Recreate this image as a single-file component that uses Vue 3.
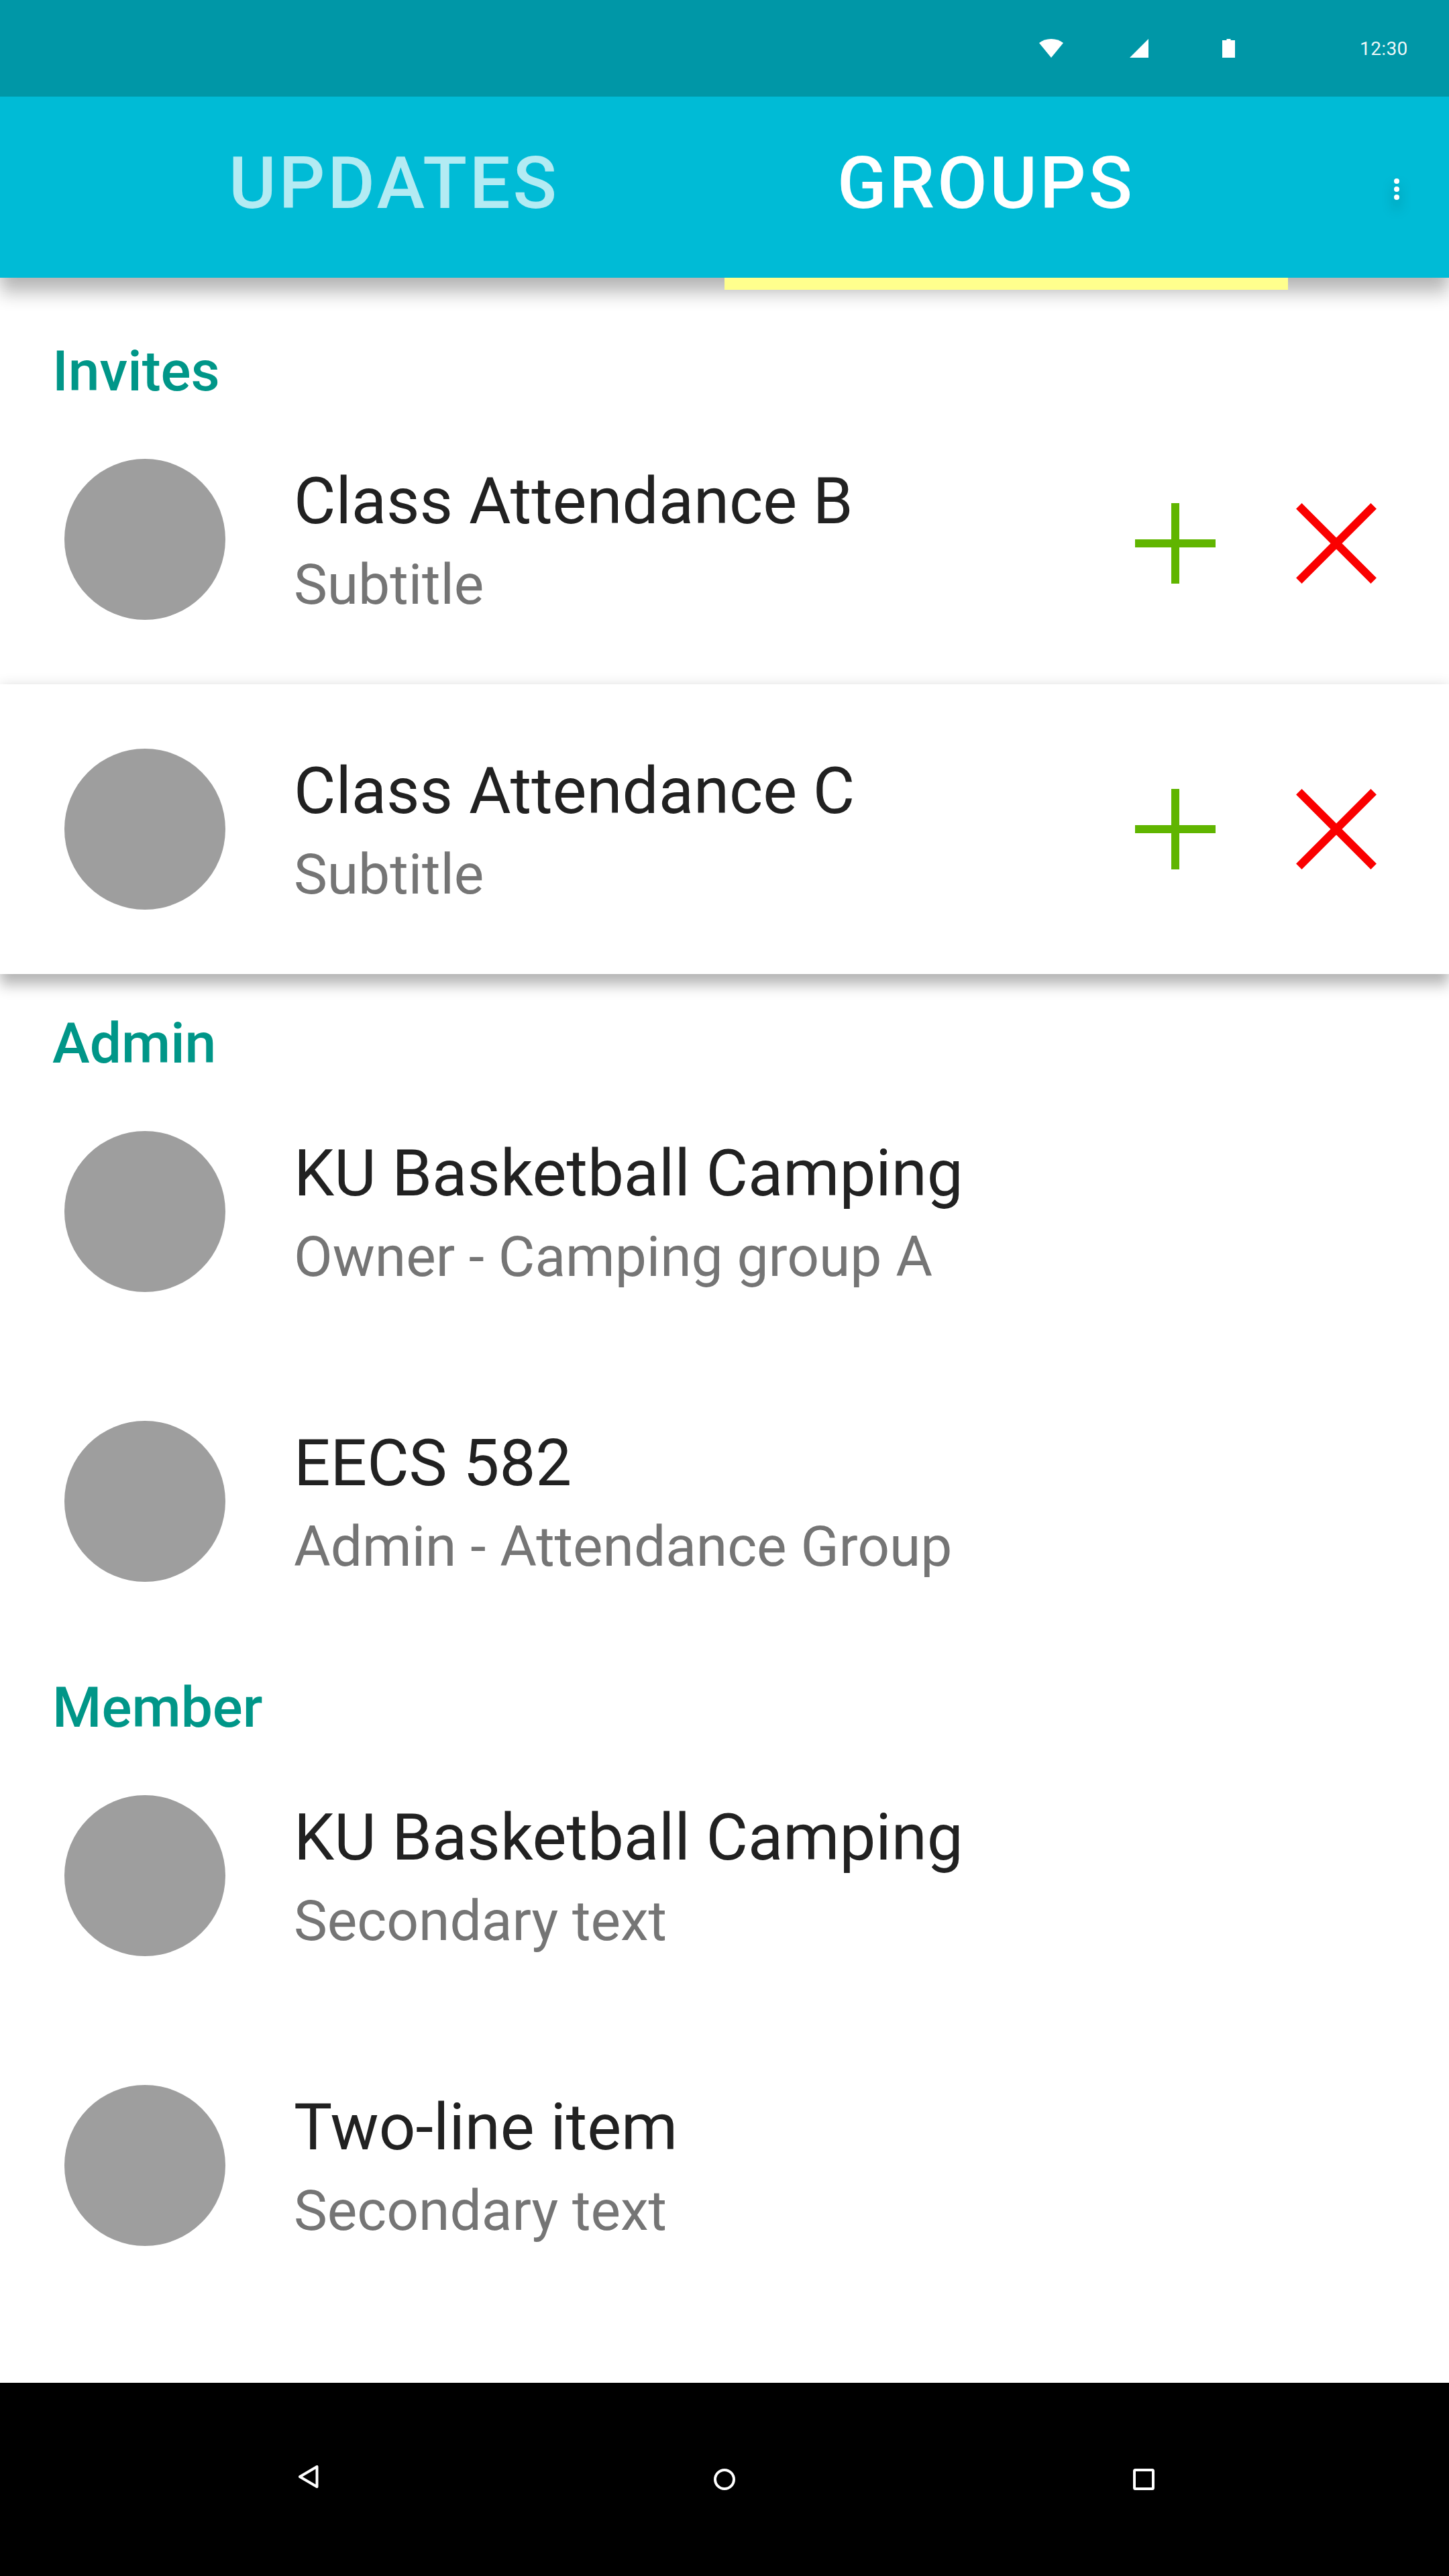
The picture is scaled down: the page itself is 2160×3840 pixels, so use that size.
<script setup>
const inviteRows = [
  { title: 'Class Attendance B', subtitle: 'Subtitle' },
  { title: 'Class Attendance C', subtitle: 'Subtitle' },
]
const sections = [
  {
    name: 'Admin',
    rows: [
      { title: 'KU Basketball Camping', subtitle: 'Owner - Camping group A' },
      { title: 'EECS 582', subtitle: 'Admin - Attendance Group' },
    ],
  },
  {
    name: 'Member',
    rows: [
      { title: 'KU Basketball Camping', subtitle: 'Secondary text' },
      { title: 'Two-line item', subtitle: 'Secondary text' },
    ],
  },
]
</script>

<template>
  <div class="screen">
    <header class="top">
      <div class="status">
        <svg class="wifi" width="38" height="28" viewBox="0 0 38 28"><path d="M19 28 1 6C6 2 12 0 19 0s13 2 18 6z" /></svg>
        <svg class="signal" width="28" height="28" viewBox="0 0 28 28"><path d="M0 28H28V0z" /></svg>
        <svg class="battery" width="19" height="28" viewBox="0 0 19 28"><path d="M0 2H6.500V0H12.500V2H19V28H0z" /></svg>
        <span class="clock">12:30</span>
      </div>
      <nav class="tabs">
        <div class="tab tab-updates"><span>UPDATES</span></div>
        <div class="tab tab-groups active"><span>GROUPS</span></div>
        <button class="more" aria-label="More options">
          <svg width="8" height="32" viewBox="0 0 8 32"><circle cx="4" cy="4" r="4" /><circle cx="4" cy="16" r="4" /><circle cx="4" cy="28" r="4" /></svg>
        </button>
      </nav>
    </header>

    <main class="content">
      <section class="invites">
        <h2>Invites</h2>
        <div v-for="row in inviteRows" :key="row.title" class="row">
          <div class="avatar"></div>
          <div class="text">
            <p class="title">{{ row.title }}</p>
            <p class="subtitle">{{ row.subtitle }}</p>
          </div>
          <div class="actions">
            <svg width="120" height="120" viewBox="0 0 120 120" stroke="#60b500" stroke-width="12"><path d="M0 60H120M60 0V120" /></svg>
            <svg width="120" height="120" viewBox="0 0 120 120" stroke="#fa0000" stroke-width="12"><path d="M4.300 4.300 115.700 115.700M115.700 4.300 4.300 115.700" /></svg>
          </div>
        </div>
      </section>

      <section v-for="section in sections" :key="section.name" class="group">
        <h2>{{ section.name }}</h2>
        <div v-for="row in section.rows" :key="row.title" class="row">
          <div class="avatar"></div>
          <div class="text">
            <p class="title">{{ row.title }}</p>
            <p class="subtitle">{{ row.subtitle }}</p>
          </div>
        </div>
      </section>
    </main>

    <footer class="navbar">
      <svg class="back" width="30" height="34" viewBox="0 0 30 34"><path d="M27.500 2V32L2 17z" /></svg>
      <svg class="home" width="32" height="32" viewBox="0 0 32 32"><circle cx="16" cy="16" r="14" /></svg>
      <svg class="recent" width="32" height="32" viewBox="0 0 32 32"><rect x="2" y="2" width="28" height="28" rx="1.500" /></svg>
    </footer>
  </div>
</template>

<style>
body {
  margin: 0;
  background: #fff;
}
</style>

<style scoped>
.screen {
  display: flex;
  flex-direction: column;
  width: 2160px;
  height: 3840px;
  overflow: hidden;
  background: #fff;
  font-family: Roboto, "Noto Sans", sans-serif;
}
.top {
  position: relative;
  z-index: 2;
  flex: none;
  box-shadow: 0 0 24px rgba(0, 0, 0, 0.12), 0 24px 24px rgba(0, 0, 0, 0.24);
}
.status {
  display: flex;
  align-items: center;
  height: 144px;
  box-sizing: border-box;
  padding-left: 1548px;
  background: #0097a7;
  fill: #fff;
}
.signal { margin-left: 98px; }
.battery { margin-left: 110px; }
.clock {
  margin: 2px 0 0 186px;
  font-size: 28px;
  font-weight: 400;
  line-height: 34px;
  letter-spacing: 0.4px;
  color: rgba(255, 255, 255, 0.95);
}
.tabs {
  display: flex;
  height: 270px;
  background: #00bbd6;
}
.tab {
  box-sizing: border-box;
  padding-top: 65px;
  font-size: 108px;
  font-weight: 500;
  line-height: 128px;
  letter-spacing: 3.8px;
  color: #fff;
}
.tab-updates {
  width: 1080px;
  padding-left: 341px;
  color: rgba(255, 255, 255, 0.7);
}
.tab-groups {
  width: 840px;
  height: 288px;
  padding-left: 168px;
  border-bottom: 18px solid #ffff8d;
}
.more {
  width: 240px;
  margin: 0;
  padding: 122px 0 0 158px;
  border: 0;
  background: none;
  display: flex;
  align-items: flex-start;
}
.more svg {
  overflow: visible;
  fill: #fff;
  filter: drop-shadow(0 12px 9px rgba(0, 0, 0, 0.3));
}
.content {
  flex: 1;
}
h2 {
  margin: 0 0 -16px;
  padding-left: 78px;
  font-size: 84px;
  font-weight: 500;
  line-height: 100px;
  color: #009688;
}
.invites {
  padding-top: 90px;
}
.row {
  display: flex;
  align-items: flex-start;
  box-sizing: border-box;
  height: 432px;
  padding: 96px 108px 0 96px;
}
.invites .row + .row {
  background: #fff;
  box-shadow: 0 0 18px rgba(0, 0, 0, 0.12), 0 18px 18px rgba(0, 0, 0, 0.24);
}
.avatar {
  flex: none;
  width: 240px;
  height: 240px;
  border-radius: 50%;
  background: #9e9e9e;
}
.text {
  flex: 1;
  margin-left: 102px;
}
p {
  margin: 0;
  white-space: nowrap;
}
.title {
  padding-top: 7px;
  font-size: 96px;
  line-height: 112px;
  color: #212121;
}
.subtitle {
  padding-top: 19px;
  font-size: 84px;
  line-height: 100px;
  letter-spacing: -0.05px;
  color: #757575;
}
.actions {
  display: flex;
  gap: 120px;
  padding-top: 66px;
}
.invites .row + .row .actions {
  padding-top: 60px;
}
.group h2 {
  padding-top: 54px;
}
.group + .group h2 {
  padding-top: 42px;
}
.navbar {
  display: flex;
  flex: none;
  align-items: flex-start;
  box-sizing: border-box;
  height: 288px;
  padding: 128px 0 0 445px;
  background: #000;
  fill: none;
  stroke: #fff;
  stroke-width: 4;
  stroke-linejoin: round;
}
.back { margin-top: -5px; }
.home { margin-left: 589px; }
.recent { margin-left: 593px; }
</style>
